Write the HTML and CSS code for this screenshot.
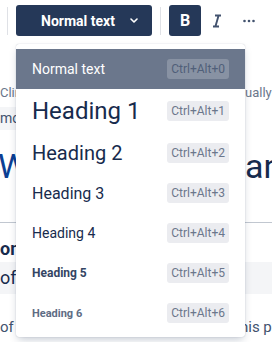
FILE: index.html
```html
<!DOCTYPE html>
<html lang="en">
<head>
<meta charset="UTF-8">
<meta name="viewport" content="width=device-width, initial-scale=1.0">
<title>Text styles</title>
<link rel="stylesheet" href="styles.css">
</head>
<body>
<div class="editor">
    <div class="toolbar">
        <span class="sep"></span>
        <button class="style-btn">
            Normal text
            <svg width="8" height="5" viewBox="0 0 8 5"><path d="M1 1l3 3 3-3" fill="none" stroke="#fff" stroke-width="1.6" stroke-linecap="round" stroke-linejoin="round"/></svg>
        </button>
        <span class="sep"></span>
        <button class="tool-btn active">B</button>
        <button class="tool-btn italic">
            <svg width="24" height="24" viewBox="0 0 24 24"><path d="M10 6.5h6M8 17.5h6M13.6 6.5l-3.2 11" fill="none" stroke="#42526e" stroke-width="1.9"/></svg>
        </button>
        <button class="tool-btn more">
            <svg width="24" height="24" viewBox="0 0 24 24"><circle cx="7.5" cy="12" r="1.3" fill="#42526e"/><circle cx="12" cy="12" r="1.3" fill="#42526e"/><circle cx="16.5" cy="12" r="1.3" fill="#42526e"/></svg>
        </button>
    </div>

    <!-- document behind the menu -->
    <div class="doc">
        <div class="line hint"><span>Clinical</span><span class="right">ually the</span></div>
        <div class="line code"><span class="chip">mode</span></div>
        <div class="line title"><span class="w">W</span><span class="right">an</span></div>
        <hr>
        <div class="line strong"><span>on</span></div>
        <div class="line band"><span>of</span></div>
        <div class="line body"><span>of</span><span class="right wide">his page</span></div>
    </div>

    <div class="menu">
        <div class="item selected"><span class="label normal">Normal text</span><span class="key">Ctrl+Alt+0</span></div>
        <div class="item tall"><span class="label h1">Heading 1</span><span class="key">Ctrl+Alt+1</span></div>
        <div class="item"><span class="label h2">Heading 2</span><span class="key">Ctrl+Alt+2</span></div>
        <div class="item"><span class="label h3">Heading 3</span><span class="key">Ctrl+Alt+3</span></div>
        <div class="item"><span class="label h4">Heading 4</span><span class="key">Ctrl+Alt+4</span></div>
        <div class="item"><span class="label h5">Heading 5</span><span class="key">Ctrl+Alt+5</span></div>
        <div class="item"><span class="label h6">Heading 6</span><span class="key">Ctrl+Alt+6</span></div>
    </div>
</div>
</body>
</html>
```

FILE: styles.css
```css
body {
    font-family: Roboto, "Liberation Sans", sans-serif;
    background: #fff;
    margin: 0;
    padding: 0;
}
.editor {
    position: relative;
    width: 272px;
    height: 342px;
    overflow: hidden;
}
.toolbar {
    display: flex;
    align-items: center;
    height: 41px;
    padding-left: 7px;
}
.sep {
    width: 1px;
    height: 28px;
    background: #dfe1e6;
}
button {
    font-family: inherit;
    border: none;
    background: none;
    padding: 0;
    cursor: pointer;
}
.style-btn {
    display: flex;
    align-items: center;
    gap: 15px;
    width: 136px;
    height: 31px;
    margin: 0 8px 0 8px;
    padding-left: 25px;
    background: #253858;
    color: #fff;
    font-size: 14px;
    font-weight: 700;
    border-radius: 3px;
}
.tool-btn {
    display: flex;
    align-items: center;
    justify-content: center;
    width: 24px;
    height: 31px;
    border-radius: 3px;
}
.tool-btn.active {
    width: 32px;
    margin-left: 8px;
    background: #253858;
    color: #fff;
    font-size: 16px;
    font-weight: 700;
}
.tool-btn.italic {
    margin-left: 4px;
}
.tool-btn.more {
    margin-left: 8px;
}

/* document */
.doc {
    color: #172b4d;
}
.line {
    display: flex;
    white-space: nowrap;
    overflow: hidden;
}
.line .right {
    margin-left: auto;
    width: 27px;
}
.hint {
    margin-top: 42px;
    height: 20px;
    line-height: 20px;
    font-size: 13px;
    color: #6b778c;
}
.code {
    margin-top: 4px;
    height: 23px;
}
.chip {
    background: #f4f5f7;
    color: #42526e;
    font-size: 14px;
    line-height: 23px;
    padding: 0 20px 0 0;
}
.title {
    margin-top: 16px;
    height: 40px;
    line-height: 40px;
    font-size: 34px;
}
.title .w {
    margin-left: -2px;
    color: #0b3f94;
}
hr {
    margin: 36px 0 0;
    border: none;
    border-top: 1px solid #c1c7d0;
}
.strong {
    margin-top: 14px;
    height: 24px;
    line-height: 24px;
    font-size: 18px;
    font-weight: 700;
}
.band {
    margin-top: 1px;
    height: 32px;
    line-height: 32px;
    font-size: 18px;
    background: #f4f5f7;
}
.body {
    margin-top: 23px;
    height: 20px;
    line-height: 20px;
    font-size: 15px;
    color: #42526e;
}
.line .right.wide {
    width: 32px;
}

/* dropdown */
.menu {
    position: absolute;
    left: 16px;
    top: 44px;
    width: 229px;
    padding: 5px 0 4px;
    background: #fff;
    border-radius: 3px;
    box-shadow: 0 4px 8px -2px rgba(9, 30, 66, 0.25), 0 0 1px rgba(9, 30, 66, 0.31);
}
.item {
    display: flex;
    align-items: center;
    justify-content: space-between;
    height: 40px;
    padding: 0 16px;
    color: #172b4d;
}
.item.tall {
    height: 44px;
}
.item.selected {
    background: #6b778c;
}
.label {
    white-space: nowrap;
}
.normal {
    color: #fff;
    font-size: 14px;
}
.h1 { font-size: 24px; }
.h2 { font-size: 20px; }
.h3 { font-size: 16px; }
.h4 { font-size: 14px; }
.h5 { font-size: 12px; font-weight: 700; color: #344563; }
.h6 { font-size: 11px; font-weight: 700; color: #5e6c84; }
.key {
    height: 20px;
    line-height: 20px;
    padding: 0 4px;
    border-radius: 3px;
    background: #ebecf0;
    color: #6b778c;
    font-size: 12px;
}
.selected .key {
    background: rgba(255, 255, 255, 0.2);
    color: #505f79;
}
```
